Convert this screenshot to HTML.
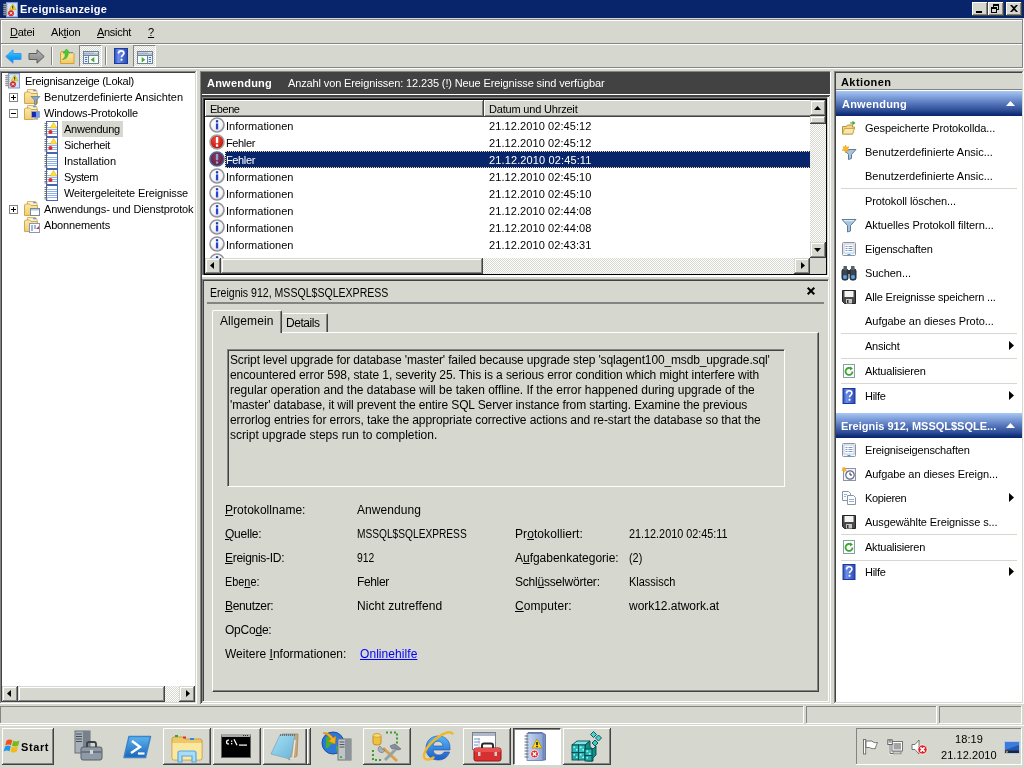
<!DOCTYPE html>
<html>
<head>
<meta charset="utf-8">
<title>Ereignisanzeige</title>
<style>
*{box-sizing:border-box;margin:0;padding:0}
html,body{width:1024px;height:768px;overflow:hidden;background:#d6d7ce}
body{font-family:"Liberation Sans",sans-serif;font-size:11px;color:#000;position:relative}
.a{position:absolute}
.t{position:absolute;white-space:nowrap;line-height:13px;height:13px;font-size:11px}
.s12{font-size:12px;line-height:14px;height:14px}
.sx{transform-origin:0 50%}
.b{font-weight:bold}
.w{color:#fff}
u{text-decoration:underline;text-underline-offset:1px}
svg{position:absolute;overflow:visible}
.hl{position:absolute;height:1px;overflow:hidden}
.vl{position:absolute;width:1px;overflow:hidden}
.wbtn{position:absolute;top:2px;width:16px;height:14px;background:#d6d7ce;box-shadow:inset -1px -1px 0 #424242,inset 1px 1px 0 #fff,inset -2px -2px 0 #848484}
.wbtn>*{margin:1px 0 0 1px}
.raise{position:absolute;background:#d6d7ce;box-shadow:inset -1px -1px 0 #424242,inset 1px 1px 0 #d6d7ce,inset -2px -2px 0 #848484,inset 2px 2px 0 #fff}
.raise>svg{margin:1px 0 0 1px}
.raise2{position:absolute;background:#d6d7ce;box-shadow:inset -1px -1px 0 #424242,inset 1px 1px 0 #fff,inset -2px -2px 0 #848484}
.sunk1{position:absolute;box-shadow:inset -1px -1px 0 #fff,inset 1px 1px 0 #848484}
.hatch{position:absolute;background-color:#fff;background-image:conic-gradient(#d6d7ce 25%,#fff 0 50%,#d6d7ce 0 75%,#fff 0);background-size:2px 2px}
</style>
</head>
<body>
<div id="root" style="position:absolute;left:0;top:0;width:1024px;height:768px;will-change:transform">
<!-- ================= TITLE BAR ================= -->
<div class="a" style="left:0;top:0;width:1024px;height:18px;background:#08246b"></div>
<!-- app icon -->
<svg style="left:3px;top:2px" width="16" height="16" viewBox="0 0 16 16">
  <rect x="3.500" y=".5" width="11" height="14.500" fill="#c4d8f4" stroke="#7c98d0" stroke-width="1"/>
  <path d="M4.500 3h9M4.500 5h9M4.500 7h9M4.500 9h9M4.500 11h9M4.500 13h9" stroke="#e8f0fc" stroke-width=".9"/>
  <path d="M.8 2.500h3M.8 4.500h3M.8 6.500h3M.8 8.500h3M.8 10.500h3M.8 12.500h3" stroke="#9a9a9a" stroke-width="1.300" stroke-linecap="round"/>
  <path d="M9.700 2l3.300 5.700H6.400z" fill="#f8dc20" stroke="#c8a400" stroke-width=".6"/>
  <rect x="9.200" y="3.800" width="1" height="2.200" fill="#222"/><rect x="9.200" y="6.400" width="1" height=".8" fill="#222"/>
  <circle cx="8" cy="11.300" r="2.700" fill="#e02828" stroke="#b81818" stroke-width=".5"/>
  <path d="M6.900 10.200l2.200 2.200M9.100 10.200l-2.200 2.200" stroke="#fff" stroke-width="1"/>
</svg>
<div class="t b w" id="cap" style="left:20px;top:3px;letter-spacing:0.216px">Ereignisanzeige</div>
<!-- window buttons -->
<div class="wbtn" style="left:972px"><div class="a" style="left:3px;top:8px;width:6px;height:2px;background:#000"></div></div>
<div class="wbtn" style="left:988px">
  <div class="a" style="left:4px;top:1px;width:6px;height:6px;border:1px solid #000;border-top-width:2px"></div>
  <div class="a" style="left:2px;top:4px;width:6px;height:6px;border:1px solid #000;border-top-width:2px;background:#d6d7ce"></div>
</div>
<div class="wbtn" style="left:1006px">
  <svg style="left:3px;top:2px" width="8" height="7" viewBox="0 0 8 7"><path d="M0 0h2l2 2 2-2h2l-3 3.5 3 3.5h-2l-2-2-2 2h-2l3-3.5z" fill="#000"/></svg>
</div>

<!-- ================= MENU / TOOLBAR FRAME ================= -->
<div class="hl" style="left:0;top:18px;width:1024px;background:#d6d7ce"></div>
<div class="hl" style="left:0px;top:19px;width:1023px;background:#848484"></div>
<div class="hl" style="left:1px;top:20px;width:1021px;background:#fff"></div>
<div class="vl" style="left:0px;top:19px;height:49px;background:#848484"></div>
<div class="vl" style="left:1px;top:20px;height:47px;background:#fff"></div>
<div class="vl" style="left:1022px;top:19px;height:49px;background:#848484"></div>
<div class="vl" style="left:1023px;top:19px;height:50px;background:#fff"></div>
<div class="hl" style="left:1px;top:43px;width:1021px;background:#848484"></div>
<div class="hl" style="left:1px;top:44px;width:1021px;background:#fff"></div>
<div class="hl" style="left:0px;top:67px;width:1023px;background:#848484"></div>
<div class="hl" style="left:0;top:68px;width:1024px;background:#fff"></div>

<!-- menu items -->
<div class="t" style="left:10px;top:26px;letter-spacing:-0.241px"><u>D</u>atei</div>
<div class="t" style="left:51px;top:26px;letter-spacing:-0.182px">Ak<u>t</u>ion</div>
<div class="t" style="left:97px;top:26px;letter-spacing:-0.299px"><u>A</u>nsicht</div>
<div class="t" style="left:148px;top:26px"><u>?</u></div>

<!-- ================= TOOLBAR ================= -->
<!-- back arrow -->
<svg style="left:5px;top:49px" width="17" height="15" viewBox="0 0 17 15">
  <defs><linearGradient id="gb" x1="0" y1="0" x2="0" y2="1"><stop offset="0" stop-color="#60ccff"/><stop offset=".5" stop-color="#18a4f8"/><stop offset="1" stop-color="#0c80e0"/></linearGradient>
  <linearGradient id="gg" x1="0" y1="0" x2="0" y2="1"><stop offset="0" stop-color="#b8b8b8"/><stop offset=".5" stop-color="#9c9c9c"/><stop offset="1" stop-color="#888888"/></linearGradient></defs>
  <path d="M8 .8L.8 7.5 8 14.2V10.5h8V4.5H8z" fill="url(#gb)" stroke="#3c98e8" stroke-width="1" stroke-linejoin="round"/>
</svg>
<svg style="left:28px;top:49px" width="17" height="15" viewBox="0 0 17 15">
  <path d="M9 .8l7.2 6.7L9 14.2V10.5H1V4.5h8z" fill="url(#gg)" stroke="#5c5c5c" stroke-width="1" stroke-linejoin="round"/>
</svg>
<div class="vl" style="left:51px;top:47px;height:18px;background:#848484"></div>
<div class="vl" style="left:52px;top:47px;height:18px;background:#fff"></div>
<!-- folder up -->
<svg style="left:60px;top:48px" width="16" height="16" viewBox="0 0 16 16">
  <defs><linearGradient id="gfu" x1="0" y1="0" x2="0" y2="1"><stop offset="0" stop-color="#f4cc68"/><stop offset=".35" stop-color="#fbe294"/><stop offset="1" stop-color="#f0c860"/></linearGradient></defs>
  <path d="M.5 4.500l1-1h4.500l1 1h6l1 1v10H.5z" fill="url(#gfu)" stroke="#d0a040" stroke-width="1"/>
  <rect x="10.500" y="4" width="2.500" height="1.200" rx=".6" fill="#4890e8"/>
  <path d="M2.500 11.500C5 10 5.500 7.500 5 5H3l3.500-4L10 5H8c.5 3.500-1.500 6-5.500 6.500z" fill="#44cc30" stroke="#30a020" stroke-width=".5"/>
</svg>
<!-- toggle btn 1 (checked) -->
<div class="a" style="left:79px;top:45px;width:23px;height:22px;border:1px solid;border-color:#848484 #fff #fff #848484"><div class="hatch" style="left:0;top:0;width:21px;height:20px"></div></div>
<svg style="left:83px;top:51px" width="16" height="13" viewBox="0 0 16 13">
  <rect x=".5" y=".5" width="15" height="12" fill="#fff" stroke="#708498"/>
  <rect x="1" y="1" width="14" height="3.500" fill="#c4d0e0"/>
  <path d="M1 2.800h14" stroke="#8898ac" stroke-width=".8"/>
  <rect x="11.300" y="1.200" width="1.200" height="1.200" fill="#fff"/><rect x="13.300" y="1.200" width="1.200" height="1.200" fill="#fff"/>
  <path d="M1 4.500h14" stroke="#708498" stroke-width="1"/>
  <rect x="1" y="5" width="4" height="7" fill="#f0f4fa"/>
  <path d="M5.500 5v7.500" stroke="#708498"/>
  <path d="M2 6.500h2.200M2 8.500h2.200M2 10.500h2.200" stroke="#3a78e0" stroke-width="1.100"/>
  <path d="M11.300 6v5.500l-3.600-2.750z" fill="#3cb028"/>
</svg>
<div class="vl" style="left:105px;top:47px;height:18px;background:#848484"></div>
<div class="vl" style="left:106px;top:47px;height:18px;background:#fff"></div>
<!-- help -->
<svg style="left:114px;top:48px" width="14" height="16" viewBox="0 0 14 16">
  <defs><linearGradient id="gh" x1="0" y1="0" x2="1" y2="0"><stop offset="0" stop-color="#2a4fc0"/><stop offset=".3" stop-color="#6f8ee8"/><stop offset="1" stop-color="#2747b4"/></linearGradient></defs>
  <rect x=".5" y=".5" width="13" height="15" fill="url(#gh)" stroke="#1c3a9c"/>
  <path d="M4.500 5.500c0-1.800 1.200-2.700 2.700-2.700s2.700.9 2.700 2.400c0 1.900-2.400 2-2.400 4" fill="none" stroke="#fff" stroke-width="1.700"/>
  <rect x="6.600" y="10.800" width="1.800" height="1.900" fill="#fff"/>
</svg>
<!-- toggle btn 2 (checked) -->
<div class="a" style="left:133px;top:45px;width:23px;height:22px;border:1px solid;border-color:#848484 #fff #fff #848484"><div class="hatch" style="left:0;top:0;width:21px;height:20px"></div></div>
<svg style="left:137px;top:51px" width="16" height="13" viewBox="0 0 16 13">
  <rect x=".5" y=".5" width="15" height="12" fill="#fff" stroke="#708498"/>
  <rect x="1" y="1" width="14" height="3.500" fill="#c4d0e0"/>
  <path d="M1 2.800h14" stroke="#8898ac" stroke-width=".8"/>
  <rect x="11.300" y="1.200" width="1.200" height="1.200" fill="#fff"/><rect x="13.300" y="1.200" width="1.200" height="1.200" fill="#fff"/>
  <path d="M1 4.500h14" stroke="#708498" stroke-width="1"/>
  <rect x="11" y="5" width="4" height="7" fill="#f0f4fa"/>
  <path d="M10.500 5v7.500" stroke="#708498"/>
  <path d="M11.800 6.500h2.200M11.800 8.500h2.200M11.800 10.500h2.200" stroke="#3a78e0" stroke-width="1.100"/>
  <path d="M4.700 6v5.500l3.600-2.750z" fill="#3cb028"/>
</svg>
<!-- ================= SVG SYMBOLS ================= -->
<svg width="0" height="0" style="left:0;top:0">
  <defs>
    <linearGradient id="gfo" x1="0" y1="0" x2="0" y2="1"><stop offset="0" stop-color="#fbe8a8"/><stop offset="1" stop-color="#f0cc70"/></linearGradient>
    <radialGradient id="ginf" cx=".45" cy=".4" r=".6"><stop offset="0" stop-color="#fff"/><stop offset=".7" stop-color="#f4f4f8"/><stop offset="1" stop-color="#c4c4cc"/></radialGradient>
    <radialGradient id="gerr" cx=".45" cy=".35" r=".65"><stop offset="0" stop-color="#ec5040"/><stop offset=".7" stop-color="#d42018"/><stop offset="1" stop-color="#a41410"/></radialGradient>
    <radialGradient id="gers" cx=".45" cy=".35" r=".65"><stop offset="0" stop-color="#84385c"/><stop offset=".7" stop-color="#742248"/><stop offset="1" stop-color="#5c1c40"/></radialGradient>
    <symbol id="i-folder" viewBox="0 0 16 16">
      <path d="M3.500 .5h8l1.500 1.500v4h-9.500z" fill="#fbf0cc" stroke="#d8b868" stroke-width="1"/>
      <rect x="9" y="1" width="3" height="1.300" rx=".5" fill="#5898e8"/>
      <path d="M.5 4l1-1h4l1.500 1.500h6.500v10H.5z" fill="url(#gfo)" stroke="#d0a850" stroke-width="1"/>
    </symbol>
    <symbol id="i-log" viewBox="0 0 16 16">
      <rect x="3.500" y=".5" width="11" height="15" fill="#fff" stroke="#4667b0"/>
      <path d="M5 4.500h9M5 6.500h9M5 8.500h9M5 10.500h9M5 12.500h9" stroke="#8fb3e8" stroke-width="1"/>
      <path d="M1.500 2.500h3M1.500 4.500h3M1.500 6.500h3M1.500 8.500h3M1.500 10.500h3M1.500 12.500h3M1.500 14h3" stroke="#666" stroke-width=".9"/>
    </symbol>
    <symbol id="i-logw" viewBox="0 0 16 16">
      <rect x="3.500" y=".5" width="11" height="15" fill="#fff" stroke="#4667b0"/>
      <path d="M5 8.500h9M5 10.500h9M5 12.500h9M5 6.500h3" stroke="#8fb3e8" stroke-width="1"/>
      <path d="M1.500 2.500h3M1.500 4.500h3M1.500 6.500h3M1.500 8.500h3M1.500 10.500h3M1.500 12.500h3M1.500 14h3" stroke="#666" stroke-width=".9"/>
      <path d="M10.500 1.500l3.500 5.500H7z" fill="#ffe23a" stroke="#d8a800" stroke-width=".5"/>
      <circle cx="7.500" cy="11" r="2" fill="#e02828"/>
    </symbol>
    <symbol id="i-info" viewBox="0 0 16 16">
      <circle cx="8" cy="8" r="7" fill="url(#ginf)" stroke="#94949c" stroke-width="1.600"/>
      <rect x="6.900" y="6.400" width="2.300" height="6" fill="#2048c8"/>
      <rect x="6.900" y="3.200" width="2.300" height="2.200" fill="#1838b0"/>
    </symbol>
    <symbol id="i-err" viewBox="0 0 16 16">
      <circle cx="8" cy="8" r="7" fill="url(#gerr)" stroke="#a4a0a0" stroke-width="1.600"/>
      <rect x="6.900" y="3" width="2.300" height="6.200" fill="#fff"/>
      <rect x="6.900" y="10.400" width="2.300" height="2.300" fill="#fff"/>
    </symbol>
    <symbol id="i-errsel" viewBox="0 0 16 16">
      <circle cx="8" cy="8" r="7" fill="url(#gers)" stroke="#4c6494" stroke-width="1.600"/>
      <rect x="6.900" y="3" width="2.300" height="6.200" fill="#8ca4d0"/>
      <rect x="6.900" y="10.400" width="2.300" height="2.300" fill="#8ca4d0"/>
    </symbol>
    <symbol id="i-refresh" viewBox="0 0 16 16">
      <rect x="2.500" y="1.500" width="11" height="13" fill="#fff" stroke="#8a9ab0"/>
      <path d="M11.500 8.500a3.500 3.500 0 1 1-1.200-2.700" fill="none" stroke="#3aa82c" stroke-width="1.800"/>
      <path d="M9 3.500l3 2-3 2z" fill="#3aa82c"/>
    </symbol>
    <symbol id="i-help" viewBox="0 0 16 16">
      <rect x="2" y=".5" width="12" height="15" fill="url(#gh)" stroke="#1c3a9c"/>
      <path d="M5.500 5.500c0-1.800 1.200-2.700 2.700-2.700s2.700.9 2.700 2.400c0 1.900-2.400 2-2.400 4" fill="none" stroke="#fff" stroke-width="1.600"/>
      <rect x="7.600" y="10.800" width="1.800" height="1.900" fill="#fff"/>
    </symbol>
    <symbol id="i-save" viewBox="0 0 16 16">
      <path d="M1.500 1.500h13v13h-11l-2-2z" fill="#4a4a4a" stroke="#222"/>
      <rect x="3.500" y="2" width="9" height="6" fill="#f4f4f4"/>
      <rect x="5" y="10" width="6" height="4.500" fill="#c8c8c8"/>
      <rect x="6" y="11" width="1.500" height="3" fill="#333"/>
    </symbol>
    <symbol id="i-props" viewBox="0 0 16 16">
      <rect x="1.500" y="1.500" width="13" height="13" rx="1" fill="#f4f6fa" stroke="#8a94a4"/>
      <rect x="3" y="3" width="10" height="9" fill="#fff" stroke="#aab4c4" stroke-width=".7"/>
      <path d="M4.500 5.500h2M7.500 5.500h4M4.500 7.500h2M7.500 7.500h4M4.500 9.500h2M7.500 9.500h4" stroke="#7a9ad0" stroke-width="1"/>
      <rect x="6.500" y="13" width="3" height="1.300" fill="#38a0e8"/>
    </symbol>
    <symbol id="i-filter" viewBox="0 0 16 16">
      <path d="M1 2.500h14l-5.500 6v5.500l-3 1v-6.500z" fill="#a8c4dc" stroke="#5c7c9c" stroke-width="1"/>
      <path d="M2.500 3h11l-1 1.200h-9z" fill="#dcecf8"/>
    </symbol>
  </defs>
</svg>

<!-- ================= TREE PANE ================= -->
<div class="a" style="left:0px;top:71px;width:197px;height:633px;background:#fff;box-shadow:inset -1px -1px 0 #fff,inset 1px 1px 0 #848484,inset -2px -2px 0 #d6d7ce,inset 2px 2px 0 #424242"></div>
<!-- root -->
<svg style="left:5px;top:73px" width="16" height="16" viewBox="0 0 16 16">
  <rect x="3.500" y=".5" width="11" height="14.500" fill="#c4d8f4" stroke="#7c98d0" stroke-width="1"/>
  <path d="M4.500 3h9M4.500 5h9M4.500 7h9M4.500 9h9M4.500 11h9M4.500 13h9" stroke="#e8f0fc" stroke-width=".9"/>
  <path d="M.8 2.500h3M.8 4.500h3M.8 6.500h3M.8 8.500h3M.8 10.500h3M.8 12.500h3" stroke="#9a9a9a" stroke-width="1.300" stroke-linecap="round"/>
  <path d="M9.700 2l3.300 5.700H6.400z" fill="#f8dc20" stroke="#c8a400" stroke-width=".6"/>
  <rect x="9.200" y="3.800" width="1" height="2.200" fill="#222"/><rect x="9.200" y="6.400" width="1" height=".8" fill="#222"/>
  <circle cx="8" cy="11.300" r="2.700" fill="#e02828" stroke="#b81818" stroke-width=".5"/>
  <path d="M6.900 10.200l2.200 2.200M9.100 10.200l-2.200 2.200" stroke="#fff" stroke-width="1"/>
</svg>
<div class="t" style="left:25px;top:75px;letter-spacing:-0.259px">Ereignisanzeige (Lokal)</div>

<!-- expanders -->
<div class="a" style="left:9px;top:93px;width:9px;height:9px;border:1px solid #848484;background:#fff"><div class="a" style="left:1px;top:3px;width:5px;height:1px;background:#000"></div><div class="a" style="left:3px;top:1px;width:1px;height:5px;background:#000"></div></div>
<div class="a" style="left:9px;top:109px;width:9px;height:9px;border:1px solid #848484;background:#fff"><div class="a" style="left:1px;top:3px;width:5px;height:1px;background:#000"></div></div>
<div class="a" style="left:9px;top:205px;width:9px;height:9px;border:1px solid #848484;background:#fff"><div class="a" style="left:1px;top:3px;width:5px;height:1px;background:#000"></div><div class="a" style="left:3px;top:1px;width:1px;height:5px;background:#000"></div></div>

<!-- row 1: Benutzerdefinierte Ansichten -->
<svg style="left:24px;top:89px" width="16" height="16"><use href="#i-folder"/></svg>
<svg style="left:31px;top:96px" width="9" height="9" viewBox="0 0 9 9"><path d="M0 .5h9l-3.500 3.500v4.500h-2V4z" fill="#8ca8c4" stroke="#4c6c8c" stroke-width=".6"/></svg>
<div class="t" style="left:44px;top:91px;letter-spacing:-0.037px">Benutzerdefinierte Ansichten</div>
<!-- row 2: Windows-Protokolle -->
<svg style="left:24px;top:105px" width="16" height="16"><use href="#i-folder"/></svg>
<svg style="left:31px;top:111px" width="10" height="10" viewBox="0 0 10 10"><rect x=".5" y=".5" width="8" height="6" fill="#1030c8" stroke="#a0a8b8" stroke-width=".8"/><path d="M1 1h3.500L2 6H1z" fill="#1828a0"/><rect x="5" y="1" width="3" height="5" fill="#6c9cf0"/><rect x="3" y="7" width="3.500" height="1.200" fill="#b0b0b0"/><rect x="2" y="8.200" width="5.500" height=".8" fill="#c8c8c8"/></svg>
<div class="t" style="left:44px;top:107px;letter-spacing:-0.178px">Windows-Protokolle</div>
<!-- row 3: Anwendung (selected, inactive) -->
<svg style="left:43px;top:121px" width="16" height="16"><use href="#i-logw"/></svg>
<div class="a" style="left:62px;top:121px;width:61px;height:16px;background:#d6d7ce"></div>
<div class="t" style="left:64px;top:123px;letter-spacing:-0.234px">Anwendung</div>
<svg style="left:43px;top:137px" width="16" height="16"><use href="#i-logw"/></svg>
<div class="t" style="left:64px;top:139px;letter-spacing:-0.292px">Sicherheit</div>
<svg style="left:43px;top:153px" width="16" height="16"><use href="#i-log"/></svg>
<div class="t" style="left:64px;top:155px;letter-spacing:-0.049px">Installation</div>
<svg style="left:43px;top:169px" width="16" height="16"><use href="#i-logw"/></svg>
<div class="t" style="left:64px;top:171px;letter-spacing:-0.448px">System</div>
<svg style="left:43px;top:185px" width="16" height="16"><use href="#i-log"/></svg>
<div class="t" style="left:64px;top:187px;letter-spacing:-0.138px">Weitergeleitete Ereignisse</div>
<!-- row 8 -->
<svg style="left:24px;top:201px" width="16" height="16"><use href="#i-folder"/></svg>
<svg style="left:30px;top:208px" width="10" height="8" viewBox="0 0 10 8"><rect x=".5" y=".5" width="9" height="7" fill="#fff" stroke="#7888a0"/><rect x="1" y="1" width="8" height="1.500" fill="#b8c4d8"/></svg>
<div class="a" style="left:44px;top:201px;width:150px;height:16px;overflow:hidden"><div class="t" style="left:0px;top:2px;letter-spacing:-0.144px">Anwendungs- und Dienstprotokolle</div></div>
<!-- row 9 -->
<svg style="left:24px;top:217px" width="16" height="16"><use href="#i-folder"/></svg>
<svg style="left:29px;top:223px" width="11" height="10" viewBox="0 0 11 10"><rect x=".5" y=".5" width="10" height="9" fill="#fff" stroke="#8898b0"/><path d="M2 3h2M5 3h2M2 5h2M5 5h2M2 7h2" stroke="#3a6fd0" stroke-width="1"/><path d="M7 6l3-3v3z" fill="#e03030"/></svg>
<div class="t" style="left:44px;top:219px;letter-spacing:-0.172px">Abonnements</div>

<!-- tree h-scrollbar -->
<div class="hatch" style="left:2px;top:686px;width:193px;height:16px"></div>
<div class="raise" style="left:2px;top:686px;width:16px;height:16px"><svg style="left:4px;top:3px" width="4" height="7" viewBox="0 0 4 7"><path d="M4 0v7L0 3.500z" fill="#000"/></svg></div>
<div class="raise" style="left:18px;top:686px;width:147px;height:16px"></div>
<div class="raise" style="left:179px;top:686px;width:16px;height:16px"><svg style="left:6px;top:3px" width="4" height="7" viewBox="0 0 4 7"><path d="M0 0v7l4-3.500z" fill="#000"/></svg></div>
<!-- ================= MIDDLE PANE ================= -->
<!-- dark panel: header + list frame -->
<div class="a" style="left:200px;top:71px;width:630px;height:204px;background:#424242;border-top:1px solid #848484"></div>
<div class="t b w" style="left:207px;top:77px;letter-spacing:0.229px">Anwendung</div>
<div class="t w" id="hdrtxt" style="left:288px;top:77px;letter-spacing:-0.126px">Anzahl von Ereignissen: 12.235 (!) Neue Ereignisse sind verfügbar</div>
<div class="hl" style="left:201px;top:94px;width:629px;background:#fff"></div>
<!-- list frame right/bottom highlight -->
<div class="a" style="left:827px;top:97px;width:2px;height:180px;background:#fff;border-left:1px solid #d6d7ce"></div>
<div class="vl" style="left:829px;top:96px;height:608px;background:#d6d7ce"></div>
<div class="a" style="left:202px;top:275px;width:627px;height:2px;background:#fff"></div>
<div class="a" style="left:202px;top:277px;width:628px;height:2px;background:#d6d7ce"></div>
<div class="hl" style="left:202px;top:97px;width:625px;background:#848484"></div>
<div class="vl" style="left:202px;top:97px;height:178px;background:#848484"></div>
<!-- outer frame columns -->
<div class="vl" style="left:200px;top:71px;height:633px;background:#848484"></div>
<div class="vl" style="left:201px;top:72px;height:631px;background:#424242"></div>
<div class="vl" style="left:830px;top:72px;height:632px;background:#fff"></div>
<div class="hl" style="left:201px;top:703px;width:630px;background:#fff"></div>
<!-- black inner frame + white client -->
<div class="a" style="left:204px;top:99px;width:623px;height:176px;background:#fff;border:1px solid #000;overflow:hidden">
  <!-- column headers -->
  <div class="raise2" style="left:0;top:0;width:279px;height:17px"></div>
  <div class="raise2" style="left:279px;top:0;width:340px;height:17px"></div>
  <div class="t" style="left:5px;top:3px;letter-spacing:-0.462px">Ebene</div>
  <div class="t" style="left:284px;top:3px;letter-spacing:-0.189px">Datum und Uhrzeit</div>
  <!-- rows -->
  <div class="a" style="left:20px;top:51px;width:600px;height:17px;background:#08246b;outline:1px dotted #f7db94;outline-offset:-1px"></div>
  <svg style="left:4px;top:17px" width="16" height="16"><use href="#i-info"/></svg>
  <svg style="left:4px;top:34px" width="16" height="16"><use href="#i-err"/></svg>
  <svg style="left:4px;top:51px" width="16" height="16"><use href="#i-errsel"/></svg>
  <svg style="left:4px;top:68px" width="16" height="16"><use href="#i-info"/></svg>
  <svg style="left:4px;top:85px" width="16" height="16"><use href="#i-info"/></svg>
  <svg style="left:4px;top:102px" width="16" height="16"><use href="#i-info"/></svg>
  <svg style="left:4px;top:119px" width="16" height="16"><use href="#i-info"/></svg>
  <svg style="left:4px;top:136px" width="16" height="16"><use href="#i-info"/></svg>
  <svg style="left:4px;top:153px" width="16" height="16"><use href="#i-info"/></svg>
  <div class="t" style="left:21px;top:20px;letter-spacing:0.018px">Informationen</div><div class="t dt" style="left:284px;top:20px;letter-spacing:0.082px">21.12.2010 02:45:12</div>
  <div class="t" style="left:21px;top:37px;letter-spacing:-0.365px">Fehler</div><div class="t dt" style="left:284px;top:37px;letter-spacing:0.082px">21.12.2010 02:45:12</div>
  <div class="t w" style="left:21px;top:54px;letter-spacing:-0.365px">Fehler</div><div class="t dt w" style="left:284px;top:54px;letter-spacing:0.125px">21.12.2010 02:45:11</div>
  <div class="t" style="left:21px;top:71px;letter-spacing:0.018px">Informationen</div><div class="t dt" style="left:284px;top:71px;letter-spacing:0.082px">21.12.2010 02:45:10</div>
  <div class="t" style="left:21px;top:88px;letter-spacing:0.018px">Informationen</div><div class="t dt" style="left:284px;top:88px;letter-spacing:0.082px">21.12.2010 02:45:10</div>
  <div class="t" style="left:21px;top:105px;letter-spacing:0.018px">Informationen</div><div class="t dt" style="left:284px;top:105px;letter-spacing:0.082px">21.12.2010 02:44:08</div>
  <div class="t" style="left:21px;top:122px;letter-spacing:0.018px">Informationen</div><div class="t dt" style="left:284px;top:122px;letter-spacing:0.082px">21.12.2010 02:44:08</div>
  <div class="t" style="left:21px;top:139px;letter-spacing:0.018px">Informationen</div><div class="t dt" style="left:284px;top:139px;letter-spacing:0.082px">21.12.2010 02:43:31</div>
  <div class="t" style="left:21px;top:156px;letter-spacing:0.018px">Informationen</div>
  <!-- v scrollbar -->
  <div class="hatch" style="left:605px;top:0;width:16px;height:158px"></div>
  <div class="raise" style="left:605px;top:0;width:16px;height:16px"><svg style="left:3px;top:5px" width="7" height="4" viewBox="0 0 7 4"><path d="M0 4h7L3.500 0z" fill="#000"/></svg></div>
  <div class="raise" style="left:605px;top:16px;width:16px;height:8px"></div>
  <div class="raise" style="left:605px;top:142px;width:16px;height:16px"><svg style="left:3px;top:5px" width="7" height="4" viewBox="0 0 7 4"><path d="M0 0h7L3.500 4z" fill="#000"/></svg></div>
  <!-- h scrollbar -->
  <div class="hatch" style="left:0;top:158px;width:605px;height:16px"></div>
  <div class="raise" style="left:0;top:158px;width:16px;height:16px"><svg style="left:4px;top:3px" width="4" height="7" viewBox="0 0 4 7"><path d="M4 0v7L0 3.500z" fill="#000"/></svg></div>
  <div class="raise" style="left:16px;top:158px;width:262px;height:16px"></div>
  <div class="raise" style="left:589px;top:158px;width:16px;height:16px"><svg style="left:6px;top:3px" width="4" height="7" viewBox="0 0 4 7"><path d="M0 0v7l4-3.500z" fill="#000"/></svg></div>
  <div class="a" style="left:605px;top:158px;width:16px;height:16px;background:#d6d7ce"></div>
</div>

<!-- ================= DETAIL PANE ================= -->
<div class="a" style="left:202px;top:279px;width:627px;height:423px;background:#d6d7ce;border:1px solid;border-color:#848484 #fff #fff #848484;box-shadow:inset 1px 1px 0 #424242"></div>
<div class="t s12 sx" id="evtitle" style="left:210px;top:286px;transform:scaleX(0.8798)">Ereignis 912, MSSQL$SQLEXPRESS</div>
<svg style="left:807px;top:287px" width="8" height="8" viewBox="0 0 8 8"><path d="M.7.7l6.600 6.600M7.300.7L.7 7.300" stroke="#000" stroke-width="2"/></svg>
<div class="a" style="left:207px;top:302px;width:617px;height:2px;background:#848484"></div>
<!-- tab page frame -->
<div class="a" style="left:212px;top:332px;width:607px;height:360px;border:1px solid;border-color:#fff #424242 #424242 #fff;box-shadow:inset -1px -1px 0 #848484"></div>
<!-- tab: Allgemein (active) -->
<div class="a" style="left:212px;top:310px;width:70px;height:23px;background:#d6d7ce;border:1px solid;border-color:#fff #424242 transparent #fff;border-bottom:0;border-radius:2px 2px 0 0;box-shadow:inset -1px 0 0 #848484"></div>
<div class="t s12" style="left:220px;top:314px;letter-spacing:0.078px">Allgemein</div>
<!-- tab: Details -->
<div class="a" style="left:282px;top:313px;width:46px;height:19px;background:#d6d7ce;border:1px solid;border-color:#fff #424242 transparent #d6d7ce;border-bottom:0;border-radius:0 2px 0 0;box-shadow:inset -1px 0 0 #848484"></div>
<div class="t s12" style="left:286px;top:316px;letter-spacing:-0.455px">Details</div>

<!-- description box -->
<div class="a" style="left:227px;top:349px;width:558px;height:138px;border:1px solid;border-color:#848484 #fff #fff #848484;box-shadow:inset 1px 1px 0 #424242"></div>
<div class="t s12" style="left:230px;top:353px;letter-spacing:-0.137px">Script level upgrade for database 'master' failed because upgrade step 'sqlagent100_msdb_upgrade.sql'</div>
<div class="t s12" style="left:230px;top:368px;letter-spacing:-0.085px">encountered error 598, state 1, severity 25. This is a serious error condition which might interfere with</div>
<div class="t s12" style="left:230px;top:383px;letter-spacing:-0.027px">regular operation and the database will be taken offline. If the error happened during upgrade of the</div>
<div class="t s12" style="left:230px;top:398px;letter-spacing:-0.118px">'master' database, it will prevent the entire SQL Server instance from starting. Examine the previous</div>
<div class="t s12" style="left:230px;top:413px;letter-spacing:-0.084px">errorlog entries for errors, take the appropriate corrective actions and re-start the database so that the</div>
<div class="t s12" style="left:230px;top:428px;letter-spacing:0.013px">script upgrade steps run to completion.</div>

<!-- fields -->
<div class="t s12" style="left:225px;top:503px;letter-spacing:0.031px"><u>P</u>rotokollname:</div><div class="t s12" style="left:357px;top:503px;letter-spacing:0.068px">Anwendung</div>
<div class="t s12" style="left:225px;top:527px;letter-spacing:-0.234px"><u>Q</u>uelle:</div><div class="t s12 sx" style="left:357px;top:527px;transform:scaleX(0.8478)">MSSQL$SQLEXPRESS</div>
<div class="t s12" style="left:515px;top:527px;letter-spacing:0.077px">Pr<u>o</u>tokolliert:</div><div class="t s12 sx" style="left:629px;top:527px;transform:scaleX(0.9028)">21.12.2010 02:45:11</div>
<div class="t s12" style="left:225px;top:551px;letter-spacing:-0.291px"><u>E</u>reignis-ID:</div><div class="t s12 sx" style="left:357px;top:551px;transform:scaleX(0.8637)">912</div>
<div class="t s12" style="left:515px;top:551px;letter-spacing:-0.028px">A<u>u</u>fgabenkategorie:</div><div class="t s12 sx" style="left:629px;top:551px;transform:scaleX(0.9065)">(2)</div>
<div class="t s12 sx" style="left:225px;top:575px;transform:scaleX(0.9064)">Ebe<u>n</u>e:</div><div class="t s12" style="left:357px;top:575px;letter-spacing:-0.354px">Fehler</div>
<div class="t s12" style="left:515px;top:575px;letter-spacing:-0.205px">Schl<u>ü</u>sselwörter:</div><div class="t s12 sx" style="left:629px;top:575px;transform:scaleX(0.9134)">Klassisch</div>
<div class="t s12" style="left:225px;top:599px;letter-spacing:-0.343px"><u>B</u>enutzer:</div><div class="t s12" style="left:357px;top:599px;letter-spacing:0.092px">Nicht zutreffend</div>
<div class="t s12" style="left:515px;top:599px;letter-spacing:0.062px"><u>C</u>omputer:</div><div class="t s12" style="left:629px;top:599px;letter-spacing:-0.038px">work12.atwork.at</div>
<div class="t s12" style="left:225px;top:623px;letter-spacing:-0.221px">OpCo<u>d</u>e:</div>
<div class="t s12" style="left:225px;top:647px;letter-spacing:0.009px">Weitere <u>I</u>nformationen:</div><div class="t s12" style="left:360px;top:647px;color:#0000ff;text-decoration:underline;letter-spacing:0.063px">Onlinehilfe</div>
<!-- ================= ACTIONS PANE ================= -->
<div class="a" style="left:834px;top:71px;width:190px;height:633px;background:#fff;box-shadow:inset -1px -1px 0 #fff,inset 1px 1px 0 #848484,inset -2px -2px 0 #d6d7ce,inset 2px 2px 0 #424242"></div>
<div class="a" style="left:836px;top:73px;width:186px;height:17px;background:#d6d7ce;border-bottom:1px solid #848484"></div>
<div class="t b" style="left:841px;top:76px;letter-spacing:0.416px">Aktionen</div>
<!-- blue header 1 -->
<div class="a bh" style="left:836px;top:91px;width:186px;height:25px"></div>
<div class="t b w" style="left:842px;top:98px;letter-spacing:0.229px">Anwendung</div>
<svg style="left:1006px;top:101px" width="9" height="5" viewBox="0 0 9 5"><path d="M0 5h9L4.500 0z" fill="#fff"/></svg>
<!-- items -->
<svg style="left:841px;top:120px" width="16" height="16" viewBox="0 0 16 16"><path d="M1.500 6.500h4l1-1.500h5v2h2l-2 7h-10z" fill="#f3d684" stroke="#b8943a"/><path d="M3.500 8.500h10l-2 5.500h-10z" fill="#fae6a6" stroke="#b8943a" stroke-width=".7"/><path d="M9 3h4M11.500 1.500l2 1.500-2 1.500" stroke="#3aa82c" stroke-width="1.200" fill="none"/></svg>
<div class="t" style="left:865px;top:122px;letter-spacing:-0.092px">Gespeicherte Protokollda...</div>
<svg style="left:841px;top:144px" width="16" height="16" viewBox="0 0 16 16"><path d="M3 5.500h12l-4.500 5v4l-3 1v-5z" fill="#a8c4dc" stroke="#5c7c9c"/><path d="M4.500 1l1.200 2.300 2.500-.5-1.500 2 1.500 2-2.500-.3L4.500 9 3.500 6.500 1 6.200l2-1.500L2 2.500l2 .8z" fill="#ffb820" stroke="#e08800" stroke-width=".4"/></svg>
<div class="t" style="left:865px;top:146px;letter-spacing:0.004px">Benutzerdefinierte Ansic...</div>
<div class="t" style="left:865px;top:170px;letter-spacing:0.004px">Benutzerdefinierte Ansic...</div>
<div class="hl" style="left:841px;top:188px;width:176px;background:#d6d7ce"></div>
<div class="t" style="left:865px;top:195px;letter-spacing:-0.097px">Protokoll löschen...</div>
<svg style="left:841px;top:217px" width="16" height="16"><use href="#i-filter"/></svg>
<div class="t" style="left:865px;top:219px;letter-spacing:-0.024px">Aktuelles Protokoll filtern...</div>
<svg style="left:841px;top:241px" width="16" height="16"><use href="#i-props"/></svg>
<div class="t" style="left:865px;top:243px;letter-spacing:-0.156px">Eigenschaften</div>
<svg style="left:841px;top:265px" width="16" height="16" viewBox="0 0 16 16"><rect x="1" y="4" width="6" height="11" rx="2" fill="#3c4450" stroke="#1c2028"/><rect x="9" y="4" width="6" height="11" rx="2" fill="#3c4450" stroke="#1c2028"/><rect x="2.500" y="1" width="3.500" height="4" fill="#586070"/><rect x="10" y="1" width="3.500" height="4" fill="#586070"/><rect x="6.500" y="5" width="3" height="4" fill="#2c3038"/><circle cx="4" cy="12" r="2" fill="#48a8f8"/><circle cx="12" cy="12" r="2" fill="#48a8f8"/></svg>
<div class="t" style="left:865px;top:267px;letter-spacing:-0.066px">Suchen...</div>
<svg style="left:841px;top:289px" width="16" height="16"><use href="#i-save"/></svg>
<div class="t" style="left:865px;top:291px;letter-spacing:-0.174px">Alle Ereignisse speichern ...</div>
<div class="t" style="left:865px;top:315px;letter-spacing:-0.029px">Aufgabe an dieses Proto...</div>
<div class="hl" style="left:841px;top:333px;width:176px;background:#d6d7ce"></div>
<div class="t" style="left:865px;top:340px;letter-spacing:-0.225px">Ansicht</div>
<svg style="left:1009px;top:341px" width="5" height="9" viewBox="0 0 5 9"><path d="M0 0v9l5-4.500z" fill="#000"/></svg>
<div class="hl" style="left:841px;top:358px;width:176px;background:#d6d7ce"></div>
<svg style="left:841px;top:363px" width="16" height="16"><use href="#i-refresh"/></svg>
<div class="t" style="left:865px;top:365px;letter-spacing:-0.183px">Aktualisieren</div>
<div class="hl" style="left:841px;top:383px;width:176px;background:#d6d7ce"></div>
<svg style="left:841px;top:388px" width="16" height="16"><use href="#i-help"/></svg>
<div class="t" style="left:865px;top:390px;letter-spacing:-0.264px">Hilfe</div>
<svg style="left:1009px;top:391px" width="5" height="9" viewBox="0 0 5 9"><path d="M0 0v9l5-4.500z" fill="#000"/></svg>
<!-- blue header 2 -->
<div class="a bh" style="left:836px;top:413px;width:186px;height:25px"></div>
<div class="t b w" style="left:841px;top:420px;letter-spacing:-0.003px">Ereignis 912, MSSQL$SQLE...</div>
<svg style="left:1006px;top:423px" width="9" height="5" viewBox="0 0 9 5"><path d="M0 5h9L4.500 0z" fill="#fff"/></svg>
<svg style="left:841px;top:442px" width="16" height="16"><use href="#i-props"/></svg>
<div class="t" style="left:865px;top:444px;letter-spacing:-0.169px">Ereigniseigenschaften</div>
<svg style="left:841px;top:466px" width="16" height="16" viewBox="0 0 16 16"><rect x="2.500" y="2.500" width="12" height="12" fill="#f4f4f4" stroke="#8a94a4"/><circle cx="9" cy="9" r="4.200" fill="#fff" stroke="#5c6c8c" stroke-width="1.200"/><path d="M9 6.500V9h2" stroke="#333" stroke-width="1" fill="none"/><path d="M3 1l.8 1.500 1.700-.3-1 1.300 1 1.300-1.700-.2L3 6l-.6-1.500L.7 4.300 2 3.300l-.7-1.500 1.400.5z" fill="#ffb820" stroke="#e08800" stroke-width=".4"/></svg>
<div class="t" style="left:865px;top:468px;letter-spacing:-0.084px">Aufgabe an dieses Ereign...</div>
<svg style="left:841px;top:490px" width="16" height="16" viewBox="0 0 16 16"><path d="M1.500 1.500h6l2 2v7h-8z" fill="#fff" stroke="#8a94a4"/><path d="M6.500 5.500h6l2 2v7h-8z" fill="#fff" stroke="#8a94a4"/><path d="M8 9.500h5M8 11.500h5M3 4.500h3M3 6.500h2" stroke="#8fb3e8"/></svg>
<div class="t" style="left:865px;top:492px;letter-spacing:-0.343px">Kopieren</div>
<svg style="left:1009px;top:493px" width="5" height="9" viewBox="0 0 5 9"><path d="M0 0v9l5-4.500z" fill="#000"/></svg>
<svg style="left:841px;top:514px" width="16" height="16"><use href="#i-save"/></svg>
<div class="t" style="left:865px;top:516px;letter-spacing:-0.101px">Ausgewählte Ereignisse s...</div>
<div class="hl" style="left:841px;top:534px;width:176px;background:#d6d7ce"></div>
<svg style="left:841px;top:539px" width="16" height="16"><use href="#i-refresh"/></svg>
<div class="t" style="left:865px;top:541px;letter-spacing:-0.221px">Aktualisieren</div>
<div class="hl" style="left:841px;top:560px;width:176px;background:#d6d7ce"></div>
<svg style="left:841px;top:564px" width="16" height="16"><use href="#i-help"/></svg>
<div class="t" style="left:865px;top:566px;letter-spacing:-0.264px">Hilfe</div>
<svg style="left:1009px;top:567px" width="5" height="9" viewBox="0 0 5 9"><path d="M0 0v9l5-4.500z" fill="#000"/></svg>

<!-- ================= STATUS BAR ================= -->
<div class="sunk1" style="left:0;top:706px;width:804px;height:18px"></div>
<div class="sunk1" style="left:806px;top:706px;width:131px;height:18px"></div>
<div class="sunk1" style="left:939px;top:706px;width:83px;height:18px"></div>

<!-- ================= TASKBAR ================= -->
<div class="hl" style="left:0;top:724px;width:1024px;background:#d6d7ce"></div>
<div class="hl" style="left:0;top:725px;width:1024px;background:#fff"></div>
<!-- start button -->
<div class="raise2" style="left:2px;top:728px;width:52px;height:37px"></div>
<svg style="left:4px;top:738px" width="17" height="16" viewBox="0 0 17 16">
  <path d="M2.500 2.500c2.200-1.300 3.800-1.200 5.800-.2L7 7.300c-2-1-3.600-1-5.800.2z" fill="#f0501c"/>
  <path d="M9.300 2.800c2.200 1 3.900 1 6.200-.3l-1.300 5c-2.300 1.300-4 1.300-6.200.3z" fill="#78b818"/>
  <path d="M1 8.500c2.200-1.300 3.800-1.200 5.800-.2l-1.300 5c-2-1-3.600-1-5.800.2z" fill="#1c98e8"/>
  <path d="M7.800 8.800c2.200 1 3.900 1 6.200-.3l-1.300 5c-2.300 1.300-4 1.300-6.200.3z" fill="#f8b810"/>
</svg>
<div class="t b" style="left:21px;top:741px;letter-spacing:0.588px">Start</div>

<!-- Server manager (pinned) -->
<svg style="left:72px;top:730px" width="32" height="32" viewBox="0 0 32 32">
  <rect x="3" y="1" width="15" height="22" fill="#a8b0b8" stroke="#687078"/>
  <rect x="11" y="1" width="7" height="22" fill="#78808a"/>
  <path d="M4 4h6M4 6.500h6M4 9h6M4 11.500h6" stroke="#484e56" stroke-width="1.200"/>
  <rect x="9" y="17" width="21" height="13" rx="2" fill="#8e9aa6" stroke="#56606a"/>
  <path d="M15 17v-3a2 2 0 0 1 2-2h5a2 2 0 0 1 2 2v3" fill="none" stroke="#3a4048" stroke-width="1.800"/>
  <rect x="9" y="21" width="21" height="2" fill="#6a747e"/>
  <rect x="18" y="20" width="3" height="4" fill="#d0d4d8"/>
</svg>
<!-- PowerShell (pinned) -->
<svg style="left:123px;top:735px" width="29" height="24" viewBox="0 0 29 24">
  <defs><linearGradient id="gps" x1="0" y1="0" x2="0" y2="1"><stop offset="0" stop-color="#5cb4f0"/><stop offset="1" stop-color="#1c64b8"/></linearGradient></defs>
  <path d="M6 1.500h21.500L22.500 22.500H1z" fill="url(#gps)" stroke="#3c84c8" stroke-width="1.500" stroke-linejoin="round"/>
  <path d="M9 6l8 6-9 6" fill="none" stroke="#fff" stroke-width="2.400"/>
  <path d="M15 18.500h6.500" stroke="#fff" stroke-width="2.200"/>
</svg>
<!-- Explorer -->
<div class="raise2" style="left:163px;top:728px;width:48px;height:37px"></div>
<svg style="left:171px;top:733px" width="32" height="30" viewBox="0 0 32 30">
  <path d="M1 6a2 2 0 0 1 2-2h9l2 2h15a2 2 0 0 1 2 2v17a2 2 0 0 1-2 2H3a2 2 0 0 1-2-2z" fill="#eec868" stroke="#c8a040"/>
  <path d="M1.500 10h29v15a1.500 1.500 0 0 1-1.500 1.500H3A1.500 1.500 0 0 1 1.500 25z" fill="#fbe8a0"/>
  <rect x="4" y="2" width="3" height="2" fill="#30a830"/><rect x="12" y="3.500" width="3" height="2" fill="#e03030"/><rect x="19" y="5" width="4" height="2" fill="#3088e8"/>
  <path d="M7 29v-9a2 2 0 0 1 2-2h14a2 2 0 0 1 2 2v9h-4v-6H11v6z" fill="#a8dcf8" stroke="#58a8e0" stroke-width="1.200"/>
</svg>
<!-- cmd -->
<div class="raise2" style="left:213px;top:728px;width:48px;height:37px"></div>
<div class="a" style="left:221px;top:734px;width:30px;height:24px;background:#000;border:1px solid #606060;border-top:3px solid #a8a8a8"></div>
<div class="a" style="left:243px;top:735px;width:1px;height:1px;background:#303030;box-shadow:2px 0 #303030,4px 0 #303030"></div>
<svg style="left:225px;top:739px" width="22" height="7" viewBox="0 0 22 7"><path d="M4 1.200C1 .2.500 5.800 4 4.800" fill="none" stroke="#fff" stroke-width="1.300"/><rect x="6" y="1.500" width="1.300" height="1.300" fill="#fff"/><rect x="6" y="4" width="1.300" height="1.300" fill="#fff"/><path d="M9 .3l3 6" stroke="#fff" stroke-width="1.300"/><rect x="14" y="5.500" width="8" height="1.200" fill="#fff"/></svg>
<!-- notepad -->
<div class="raise2" style="left:263px;top:728px;width:48px;height:37px"></div>
<div class="vl" style="left:306px;top:729px;height:35px;background:#424242"></div>
<div class="vl" style="left:305px;top:729px;height:35px;background:#848484"></div>
<div class="vl" style="left:307px;top:729px;height:35px;background:#fff"></div>
<svg style="left:269px;top:732px" width="32" height="30" viewBox="0 0 32 30">
  <defs><linearGradient id="gnp" x1="0" y1="0" x2="1" y2="1"><stop offset="0" stop-color="#a8e0f4"/><stop offset="1" stop-color="#68b4d8"/></linearGradient></defs>
  <path d="M13 2h16l-1 22-8 4z" fill="#c8a878" stroke="#a08050" stroke-width=".7"/>
  <path d="M11 3h15l-5 24L2 22z" fill="url(#gnp)" stroke="#78a8c0" stroke-width=".8"/>
  <path d="M11 3h15" stroke="#506070" stroke-width="1.500" stroke-dasharray="1 1"/>
  <path d="M21 27l3-1 2-18" fill="none" stroke="#e8e8e8" stroke-width="1.500"/>
</svg>
<!-- IIS (pinned) -->
<svg style="left:321px;top:730px" width="32" height="32" viewBox="0 0 32 32">
  <circle cx="12" cy="13" r="11" fill="#2c78d8" stroke="#1c4c98"/>
  <path d="M5 8c3-3 6-2 8 0s1 5-2 6-3 5-6 4M15 16c3-1 6 0 6 3s-3 4-5 4" fill="#48b030"/>
  <path d="M2 3c4-1 8 1 10 5l3-2-1 8-7-3 3-1.500C8 6 5 4 2 3z" fill="#f8b020" stroke="#c88000" stroke-width=".6"/>
  <rect x="17" y="9" width="13" height="21" fill="#c0c4c8" stroke="#70787e"/>
  <rect x="24" y="9" width="6" height="21" fill="#8c949a"/>
  <path d="M18.500 12h5M18.500 14.500h5M18.500 17h5" stroke="#50585e" stroke-width="1.200"/>
  <rect x="19" y="26" width="2" height="2" fill="#30c030"/>
</svg>
<!-- tools -->
<div class="raise2" style="left:363px;top:728px;width:48px;height:37px"></div>
<svg style="left:371px;top:731px" width="32" height="32" viewBox="0 0 32 32">
  <rect x="2" y="3" width="8" height="11" rx="3.500" ry="2" fill="#f0c040" stroke="#c09020"/>
  <ellipse cx="6" cy="4.500" rx="4" ry="1.800" fill="#f8dc78" stroke="#c09020" stroke-width=".6"/>
  <path d="M15 1.500h11v11M2 19v10h10" fill="none" stroke="#38a028" stroke-width="2" stroke-dasharray="2 2"/>
  <path d="M12 17l14 13" stroke="#d8a040" stroke-width="3"/>
  <path d="M14 29l12-12" stroke="#98a0a8" stroke-width="3"/>
  <path d="M19 15l5-2 6 5-3 1-3-2-3 1z" fill="#8890a0" stroke="#586070" stroke-width=".6"/>
  <path d="M9 15a3.500 3.500 0 1 0 5 4l-3-1-1-2z" fill="#a8b0b8" stroke="#687078" stroke-width=".6"/>
</svg>
<!-- IE (pinned) -->
<svg style="left:422px;top:730px" width="32" height="32" viewBox="0 0 32 32">
  <defs><linearGradient id="gie" x1="0" y1="0" x2="0" y2="1"><stop offset="0" stop-color="#58b8f8"/><stop offset="1" stop-color="#1c5cc8"/></linearGradient></defs>
  <path d="M4 18C4 10.500 9.500 6 16.500 6 23.500 6 28 11 28 17.500v2.500H11c.4 3 2.500 5 5.800 5 2.600 0 4.300-1 5.400-3h5.300c-1.500 5-5.800 8-11 8C9 30 4 25.500 4 18zm7-2h10c-.3-3-2.200-4.800-5-4.800S11.400 13 11 16z" fill="url(#gie)" stroke="#1c4ca8" stroke-width=".6"/>
  <path d="M30.500 3.500c-2.500-3-9.500-.5-17 5.500C6.500 14.500 0 23.500 2.500 28c1.500 2.500 5.500 2 9-.5" fill="none" stroke="#f0b828" stroke-width="2.400" stroke-linecap="round"/>
</svg>
<!-- toolbox -->
<div class="raise2" style="left:463px;top:728px;width:48px;height:37px"></div>
<svg style="left:471px;top:731px" width="32" height="32" viewBox="0 0 32 32">
  <rect x="1.500" y="1.500" width="23" height="17" fill="#fff" stroke="#788090"/>
  <rect x="2" y="2" width="22" height="3" fill="#b0b8c8"/>
  <path d="M3 8h6M3 11h6M3 14h4" stroke="#7090c8" stroke-width="1"/>
  <path d="M8 7v11" stroke="#a0a8b8" stroke-width=".7"/>
  <rect x="3" y="17" width="27" height="13" rx="2" fill="#d83030" stroke="#901818"/>
  <rect x="3" y="17" width="27" height="4" rx="2" fill="#e85050"/>
  <path d="M11 17v-2.500a2 2 0 0 1 2-2h7a2 2 0 0 1 2 2V17" fill="none" stroke="#282828" stroke-width="2"/>
  <rect x="7" y="21" width="2.500" height="4" fill="#d0d0d0"/><rect x="23.500" y="21" width="2.500" height="4" fill="#d0d0d0"/>
</svg>
<!-- event viewer (active) -->
<div class="a" style="left:513px;top:728px;width:48px;height:37px;border:1px solid;border-color:#424242 #fff #fff #424242;box-shadow:inset 1px 1px 0 #848484"><div class="a" style="left:1px;top:1px;width:45px;height:34px;background:#fff"></div></div>
<svg style="left:523px;top:731px" width="24" height="32" viewBox="0 0 24 32">
  <defs><linearGradient id="gev" x1="0" y1="0" x2="1" y2="0"><stop offset="0" stop-color="#c8d8f0"/><stop offset="1" stop-color="#88a4d8"/></linearGradient></defs>
  <path d="M5 1.500h14l3.500 2V29H5z" fill="#7890c0" stroke="#506898" stroke-width=".8"/>
  <rect x="4" y="2.500" width="16" height="27" fill="url(#gev)" stroke="#6880b0" stroke-width=".8"/>
  <path d="M1.500 5h4M1.500 8h4M1.500 11h4M1.500 14h4M1.500 17h4M1.500 20h4M1.500 23h4M1.500 26h4" stroke="#606870" stroke-width="1.200"/>
  <path d="M14 8l5 9H9z" fill="#ffd820" stroke="#a88800" stroke-width=".7"/>
  <rect x="13.300" y="11" width="1.400" height="3.200" fill="#000"/><rect x="13.300" y="15" width="1.400" height="1.200" fill="#000"/>
  <circle cx="11.500" cy="23" r="4" fill="#e02828" stroke="#fff" stroke-width=".8"/>
  <path d="M9.800 21.300l3.400 3.400M13.200 21.300l-3.400 3.400" stroke="#fff" stroke-width="1.400"/>
</svg>
<!-- regedit -->
<div class="raise2" style="left:563px;top:728px;width:48px;height:37px"></div>
<svg style="left:571px;top:731px" width="32" height="32" viewBox="0 0 32 32">
  <g stroke="#064848" stroke-width=".9">
    <path d="M1 14l5-4h13l-5 4z" fill="#7ce4e4"/>
    <path d="M14 14l5-4v6l3 2 3-3v9l-3 3v3l-6 0z" fill="#148c8c"/>
    <rect x="1" y="14" width="6.500" height="7.500" fill="#28b8b8"/><rect x="7.500" y="14" width="6.500" height="7.500" fill="#30c4c4"/>
    <rect x="1" y="21.500" width="6.500" height="7.500" fill="#20a8a8"/><rect x="7.500" y="21.500" width="6.500" height="7.500" fill="#28b8b8"/>
    <rect x="14" y="18" width="7" height="6.500" fill="#28b8b8"/><rect x="14" y="24.500" width="7" height="5.500" fill="#20a8a8"/>
    <path d="M19.500 3.500l3-3 3 3-3 3z" fill="#48d4d4"/><path d="M24.500 7l3-3 3 3-3 3z" fill="#48d4d4"/><path d="M21 12l3-3 3 3-3 3z" fill="#38c8c8"/>
  </g>
  <g fill="#b8f4f4"><rect x="2.500" y="15.500" width="1.500" height="1.500"/><rect x="5" y="18" width="1.500" height="1.500"/><rect x="9" y="15.500" width="1.500" height="1.500"/><rect x="11.500" y="18" width="1.500" height="1.500"/><rect x="2.500" y="23" width="1.500" height="1.500"/><rect x="5" y="25.500" width="1.500" height="1.500"/><rect x="9" y="23" width="1.500" height="1.500"/><rect x="11.500" y="25.500" width="1.500" height="1.500"/><rect x="15.500" y="19.500" width="1.500" height="1.500"/><rect x="18" y="22" width="1.500" height="1.500"/><rect x="15.500" y="26" width="1.500" height="1.500"/></g>
</svg>

<!-- tray -->
<div class="sunk1" style="left:856px;top:728px;width:166px;height:37px"></div>
<svg style="left:863px;top:739px" width="16" height="16" viewBox="0 0 16 16"><rect x=".5" y=".5" width="2.200" height="14.500" fill="#fff" stroke="#686868" stroke-width=".9"/><path d="M3 2h6c1 1.500 3 2 5.500 1.500-1 2.500-2 4.500-2 6-2.500.5-4.500 0-6-1H3z" fill="#fff" stroke="#686868" stroke-width=".9"/></svg>
<svg style="left:887px;top:739px" width="16" height="16" viewBox="0 0 16 16"><rect x="5" y="2.500" width="10.500" height="9.500" fill="#fff" stroke="#686868" stroke-width=".9"/><rect x="6.500" y="4" width="7.500" height="6.500" fill="#a4a4a4"/><rect x="6" y="13" width="8" height="1.800" fill="#fff" stroke="#686868" stroke-width=".7"/><path d="M3 5v9.500h3" fill="none" stroke="#fff" stroke-width="2.200"/><path d="M3 5v9.500h3" fill="none" stroke="#585858" stroke-width=".9"/><rect x=".8" y=".8" width="4.400" height="4.700" fill="#fff" stroke="#585858" stroke-width=".9"/><path d="M2.200 .8v3M3.800 .8v3" stroke="#585858" stroke-width=".8"/></svg>
<svg style="left:911px;top:739px" width="18" height="16" viewBox="0 0 18 16"><path d="M1 5.500h3l4-4.500v14l-4-4.500H1z" fill="#fff" stroke="#686868" stroke-width=".9"/><circle cx="11.500" cy="10.500" r="4.600" fill="#e02020" stroke="#fff" stroke-width=".7"/><path d="M9.400 8.400l4.200 4.200M13.600 8.400l-4.200 4.200" stroke="#fff" stroke-width="1.700"/></svg>
<div class="t" style="left:955px;top:733px;font-size:11px;letter-spacing:0.094px">18:19</div>
<div class="t" style="left:941px;top:749px;font-size:11px;letter-spacing:0.063px">21.12.2010</div>
<svg style="left:1004px;top:741px" width="16" height="13" viewBox="0 0 16 13"><rect x=".5" y=".5" width="15" height="12" fill="#2058b4" stroke="#b4c8e4" stroke-width="1"/><path d="M1 1h14v3L1 9z" fill="#3c7cd8"/><rect x="1" y="9.500" width="14" height="2.500" fill="#182838"/><circle cx="2.800" cy="10.800" r="1.100" fill="#f0b020"/><circle cx="2.400" cy="10.400" r=".5" fill="#e03020"/></svg>
<style>
.bh{background:linear-gradient(#a8c8f4 0%,#8cace4 16%,#6c8ccc 36%,#4c6cb4 56%,#2c4c94 78%,#10307c 92%,#08246b 100%)}
</style>
</div>
</body>
</html>
